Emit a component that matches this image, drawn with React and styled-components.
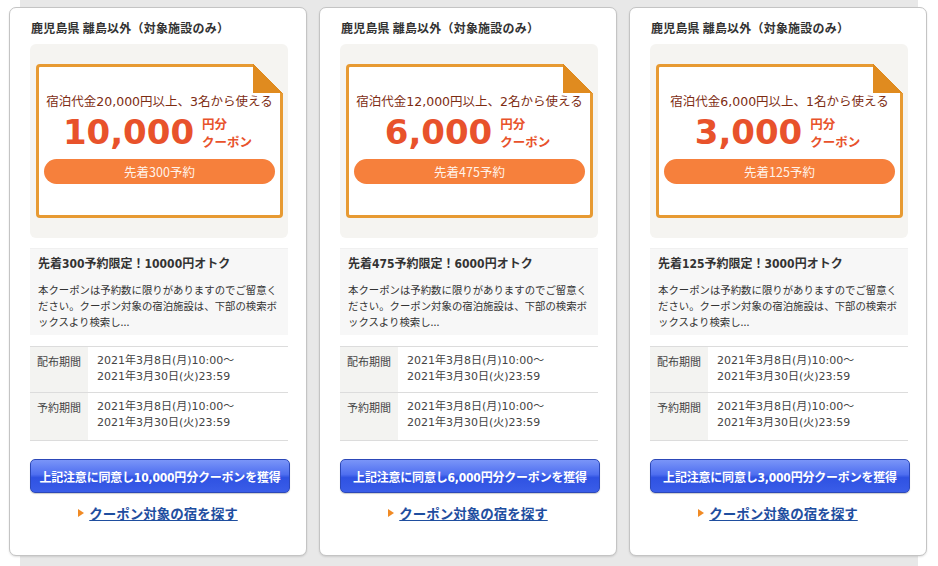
import React from "react";
import styled, { createGlobalStyle } from "styled-components";

const Global = createGlobalStyle`
  html, body { margin: 0; padding: 0; background: #fff; }
  body { font-family: "DejaVu Sans", "Noto Sans CJK JP", sans-serif; color: #333; }
`;

const Backdrop = styled.div`
  margin-left: 20px;
  width: 898px;
  height: 566px;
  background: #e8e8e8;
`;

const Row = styled.div`
  display: flex;
  gap: 12px;
  margin-left: -11px;
  padding-top: 7px;
`;

const Card = styled.div`
  box-sizing: border-box;
  width: 298px;
  height: 549px;
  background: #fff;
  border: 1px solid #c4c4c4;
  border-radius: 7px;
  box-shadow: 0 1px 2px rgba(0, 0, 0, 0.12);
  padding: 12px 18px 0 20px;
  display: flex;
  flex-direction: column;
`;

const Region = styled.div`
  font-family: "Noto Sans CJK JP", sans-serif;
  font-weight: 700;
  font-size: 12px;
  line-height: 16px;
  color: #333;
  padding-left: 1px;
  letter-spacing: 0.2px;
`;

const CouponBox = styled.div`
  margin-top: 8px;
  background: #f5f4f1;
  border-radius: 6px;
  padding: 20px 5px 20px 6px;
`;

const Paper = styled.div`
  position: relative;
  box-sizing: border-box;
  height: 154px;
  background: #fff;
  border: 3px solid #e79a32;
  border-radius: 4px;
  padding: 27px 5px 0;
  display: flex;
  flex-direction: column;
  align-items: center;
`;

const Fold = styled.div`
  position: absolute;
  top: -3px;
  right: -3px;
  width: 30px;
  height: 29px;
  background: linear-gradient(to top right, #e08b1f 50%, #f5f4f1 50%);
`;

const Condition = styled.div`
  font-size: 12.5px;
  line-height: 16px;
  color: #7d2c12;
  white-space: nowrap;
`;

const AmountRow = styled.div`
  display: flex;
  align-items: center;
  gap: 8px;
  margin-top: 3px;
  margin-left: -4px;
  height: 38px;
`;

const Amount = styled.div`
  font-family: "DejaVu Sans", sans-serif;
  font-weight: 700;
  font-size: 34px;
  line-height: 38px;
  color: #e8522b;
`;

const Unit = styled.div`
  display: flex;
  flex-direction: column;
  margin-top: 1px;
`;

const UnitLine = styled.span`
  font-family: "Noto Sans CJK JP", sans-serif;
  font-weight: 700;
  font-size: 12.5px;
  line-height: 18px;
  color: #e8522b;
`;

const Pill = styled.div`
  align-self: stretch;
  margin-top: 8px;
  height: 25px;
  border-radius: 13px;
  background: #f6803c;
  color: #fff3ea;
  font-family: "Noto Sans CJK JP", sans-serif;
  font-size: 12.5px;
  line-height: 25px;
  text-align: center;
`;

const Info = styled.div`
  margin-top: 10px;
  background: #f7f7f7;
  border-top: 1px solid #f0f0f0;
  padding: 7px 8px 8px;
  height: 87px;
  box-sizing: border-box;
`;

const InfoTitle = styled.div`
  font-family: "DejaVu Sans Condensed", "Noto Sans CJK JP", sans-serif;
  font-weight: 700;
  font-size: 12px;
  line-height: 16px;
  color: #333;
`;

const InfoText = styled.div`
  margin-top: 10px;
  font-family: "Noto Sans CJK JP", sans-serif;
  font-size: 10.4px;
  line-height: 16px;
  color: #333;
`;

const Table = styled.div`
  margin-top: 11px;
  border-top: 1px solid #dcdcdc;
`;

const TRow = styled.div`
  display: flex;
  height: ${(p) => p.$h}px;
  border-bottom: 1px solid #dcdcdc;
  box-sizing: border-box;
`;

const Label = styled.div`
  width: 58px;
  flex-shrink: 0;
  background: #f3f3f1;
  padding: 6px 0 0 7px;
  box-sizing: border-box;
  font-family: "Noto Sans CJK JP", sans-serif;
  font-size: 11px;
  line-height: 16px;
  color: #444;
`;

const Value = styled.div`
  padding: 6px 0 0 9px;
  font-size: 11px;
  line-height: 16px;
  color: #444;
  white-space: nowrap;
`;

const GetButton = styled.button`
  margin-top: 18px;
  height: 34px;
  width: 260px;
  border: 1px solid #2c48b8;
  border-radius: 5px;
  background: linear-gradient(#7a95f8 0%, #4f6ff0 45%, #2f52e2 55%, #3a5de8 100%);
  color: #fff;
  font-family: "DejaVu Sans Condensed", "Noto Sans CJK JP", sans-serif;
  font-weight: 700;
  font-size: 12px;
  letter-spacing: -0.2px;
  padding: 0;
  white-space: nowrap;
  box-shadow: 0 1px 1px rgba(0, 0, 0, 0.2);
  cursor: pointer;
`;

const LinkRow = styled.div`
  margin-top: 11px;
  display: flex;
  align-items: center;
  justify-content: center;
  gap: 5px;
  padding-right: 2px;
`;

const Arrow = styled.span`
  width: 0;
  height: 0;
  border-left: 6px solid #f08a24;
  border-top: 4px solid transparent;
  border-bottom: 4px solid transparent;
`;

const SearchLink = styled.a`
  font-family: "Noto Sans CJK JP", sans-serif;
  font-weight: 700;
  font-size: 13.5px;
  line-height: 18px;
  color: #1f4e9f;
  text-decoration: underline;
  cursor: pointer;
`;

const coupons = [
  { min: "20,000", people: 3, amount: "10,000", limit: 300, plain: 10000 },
  { min: "12,000", people: 2, amount: "6,000", limit: 475, plain: 6000 },
  { min: "6,000", people: 1, amount: "3,000", limit: 125, plain: 3000 },
];

function Period() {
  return (
    <Value>
      2021年3月8日(月)10:00～
      <br />
      2021年3月30日(火)23:59
    </Value>
  );
}

function CouponCard({ c }) {
  return (
    <Card>
      <Region>鹿児島県 離島以外（対象施設のみ）</Region>
      <CouponBox>
        <Paper>
          <Fold />
          <Condition>
            宿泊代金{c.min}円以上、{c.people}名から使える
          </Condition>
          <AmountRow>
            <Amount>{c.amount}</Amount>
            <Unit>
              <UnitLine>円分</UnitLine>
              <UnitLine>クーポン</UnitLine>
            </Unit>
          </AmountRow>
          <Pill>先着{c.limit}予約</Pill>
        </Paper>
      </CouponBox>
      <Info>
        <InfoTitle>
          先着{c.limit}予約限定！{c.plain}円オトク
        </InfoTitle>
        <InfoText>
          本クーポンは予約数に限りがありますのでご留意ください。クーポン対象の宿泊施設は、下部の検索ボックスより検索し...
        </InfoText>
      </Info>
      <Table>
        <TRow $h={46}>
          <Label>配布期間</Label>
          <Period />
        </TRow>
        <TRow $h={48}>
          <Label>予約期間</Label>
          <Period />
        </TRow>
      </Table>
      <GetButton>上記注意に同意し{c.amount}円分クーポンを獲得</GetButton>
      <LinkRow>
        <Arrow />
        <SearchLink>クーポン対象の宿を探す</SearchLink>
      </LinkRow>
    </Card>
  );
}

export default function App() {
  return (
    <>
      <Global />
      <Backdrop>
        <Row>
          {coupons.map((c) => (
            <CouponCard key={c.limit} c={c} />
          ))}
        </Row>
      </Backdrop>
    </>
  );
}
